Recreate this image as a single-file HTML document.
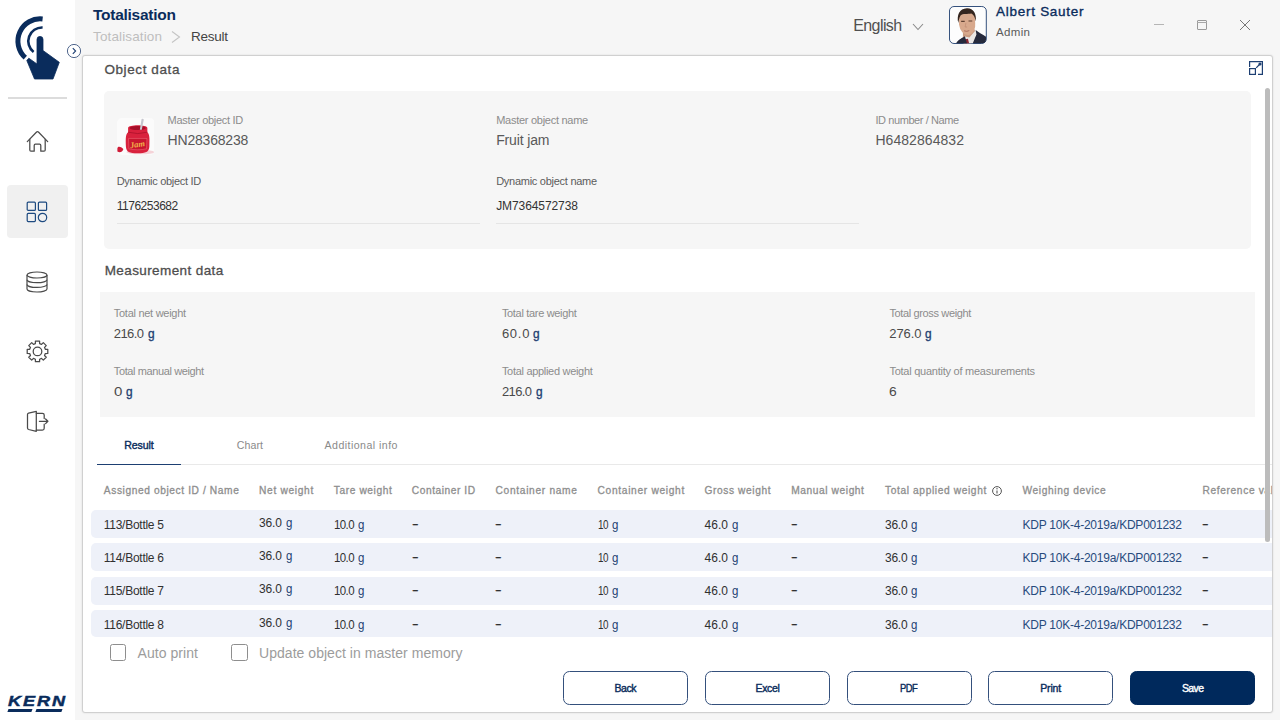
<!DOCTYPE html>
<html lang="en">
<head>
<meta charset="utf-8">
<title>Totalisation - Result</title>
<style>
*{box-sizing:border-box;margin:0;padding:0}
html,body{width:1280px;height:720px;overflow:hidden}
body{background:#f6f6f6;font-family:"Liberation Sans",sans-serif;position:relative;color:#555}
.a{position:absolute}
.t{position:absolute;white-space:pre;line-height:1}
#side{left:0;top:0;width:74.5px;height:720px;background:#fff}
#panel{left:82px;top:55px;width:1191px;height:658px;background:#fff;border:1px solid #d0d0d0;border-radius:3px;box-shadow:0 0 2px rgba(0,0,0,.12)}
.card{background:#f6f6f6}
.row{left:90.5px;width:1181px;height:27.8px;background:#eef1f9;border-radius:5px 0 0 5px}
.ul{height:1px;background:#e5e5e5;width:363px;top:222.5px}
.btn{top:670.9px;width:125px;height:33.7px;border:1px solid #34507c;border-radius:6.5px;background:#fff}
.cb{width:16.6px;height:16.6px;border:1px solid #8e8e8e;border-radius:2.5px;background:#fff;top:644.2px}
#txt{left:0;top:0;width:1272px;height:720px;overflow:hidden}
</style>
</head>
<body>
<div id="side" class="a">
<!-- touch logo -->
<svg class="a" style="left:0;top:0" width="75" height="92" viewBox="0 0 75 92">
<path d="M42.6 19 A22.2 22.2 0 0 0 25.3 57.6" fill="none" stroke="#0a2c5c" stroke-width="5"/>
<path d="M42.6 27.5 A13.7 13.7 0 0 0 33.6 52" fill="none" stroke="#0a2c5c" stroke-width="2.6"/>
<path d="M37 39.4 a3 3 0 0 1 6 0 V50.5 L59.3 62.3 L53 79 H34.5 L26.8 60.5 L28.8 58.2 L37 64 Z" fill="#0a2c5c" stroke="#0a2c5c" stroke-width=".8" stroke-linejoin="round"/>
</svg>
<!-- expand circle -->
<svg class="a" style="left:66px;top:43px;z-index:5" width="16" height="16" viewBox="0 0 16 16">
<circle cx="8" cy="8" r="6.6" fill="#fff" stroke="#3d5680" stroke-width=".9"/>
<path d="M6.8 5.2 L9.6 8 L6.8 10.8" fill="none" stroke="#1d3f72" stroke-width="1.1"/>
</svg>
<div class="a" style="left:8px;top:97px;width:59px;height:1.5px;background:#dcdcdc"></div>
<!-- home -->
<svg class="a" style="left:0;top:120px" width="75" height="44" viewBox="0 120 75 44" fill="none" stroke="#4a4a4a" stroke-width="1.25" stroke-linejoin="round" stroke-linecap="round">
<path d="M27.3 141.6 L36.6 132 Q37.5 131.1 38.4 132 L47.7 141.6"/>
<path d="M29.8 139.4 V150 Q29.8 151.2 31 151.2 H34.2 V145.4 Q34.2 144.2 35.4 144.2 H39.6 Q40.8 144.2 40.8 145.4 V151.2 H44 Q45.2 151.2 45.2 150 V139.4"/>
</svg>
<!-- active tile -->
<div class="a" style="left:7px;top:185px;width:61px;height:53px;background:#f0f0f0;border-radius:4px"></div>
<svg class="a" style="left:25px;top:200px" width="24" height="24" viewBox="0 0 24 24" fill="none" stroke="#1d4a80" stroke-width="1.2">
<rect x="2.2" y="2.2" width="8.2" height="8.2" rx="1"/>
<rect x="13.4" y="2.2" width="8.2" height="8.2" rx="1"/>
<rect x="2.2" y="13.4" width="8.2" height="8.2" rx="1"/>
<circle cx="17.5" cy="17.5" r="4.2"/>
</svg>
<!-- database -->
<svg class="a" style="left:25px;top:270px" width="24" height="24" viewBox="0 0 24 24" fill="none" stroke="#4a4a4a" stroke-width="1.2">
<ellipse cx="12" cy="5" rx="10" ry="3"/>
<path d="M2 5 V19 C2 20.7 6.5 22 12 22 S22 20.7 22 19 V5"/>
<path d="M2 9.7 C2 11.4 6.5 12.7 12 12.7 S22 11.4 22 9.7"/>
<path d="M2 14.4 C2 16.1 6.5 17.4 12 17.4 S22 16.1 22 14.4"/>
</svg>
<!-- gear -->
<svg class="a" style="left:0;top:330px" width="75" height="44" viewBox="0 330 75 44" fill="none" stroke="#4a4a4a" stroke-width="1.25" stroke-linejoin="round">
<circle cx="37.5" cy="351.4" r="4.3"/>
<path d="M35.40 343.58 L35.41 341.11 L39.59 341.11 L39.60 343.58 L41.55 344.39 L43.30 342.64 L46.26 345.60 L44.51 347.35 L45.32 349.30 L47.79 349.31 L47.79 353.49 L45.32 353.50 L44.51 355.45 L46.26 357.20 L43.30 360.16 L41.55 358.41 L39.60 359.22 L39.59 361.69 L35.41 361.69 L35.40 359.22 L33.45 358.41 L31.70 360.16 L28.74 357.20 L30.49 355.45 L29.68 353.50 L27.21 353.49 L27.21 349.31 L29.68 349.30 L30.49 347.35 L28.74 345.60 L31.70 342.64 L33.45 344.39 Z"/>
</svg>
<!-- logout -->
<svg class="a" style="left:0;top:400px" width="75" height="44" viewBox="0 400 75 44" fill="none" stroke="#4a4a4a" stroke-width="1.25" stroke-linejoin="round" stroke-linecap="round">
<path d="M28.6 413.1 L36.3 411.4 V431.3 L28.6 429.5 Q27.5 429.2 27.5 428.1 V414.4 Q27.5 413.4 28.6 413.1 Z"/>
<path d="M36.3 413.3 H42.4 Q44.2 413.3 44.2 415.1 V418.6"/>
<path d="M44.2 424.2 V428.2 Q44.2 430 42.4 430 H36.3"/>
<path d="M39.4 421.3 H47.8 M45.6 419 L47.9 421.3 L45.6 423.6"/>
</svg>
<!-- KERN -->
<div class="t" style="left:8.2px;top:694.3px;font-size:16.5px;font-weight:bold;font-style:italic;color:#0a2c5c;letter-spacing:1.7px;-webkit-text-stroke:.5px #0a2c5c;transform:scale(1.1,.84);transform-origin:0 0">KERN</div>
<div class="a" style="left:7.6px;top:708.8px;width:24.4px;height:2.6px;background:#0a2c5c;transform:skewX(-20deg)"></div>
<div class="a" style="left:36.2px;top:708.8px;width:25.8px;height:2.6px;background:#0a2c5c;transform:skewX(-20deg)"></div>
</div>
<!-- header icons -->
<svg class="a" style="left:170px;top:30px" width="12" height="14" viewBox="0 0 12 14"><path d="M2 1.5 L9.5 7 L2 12.5" fill="none" stroke="#c4c4c4" stroke-width="1.1"/></svg>
<svg class="a" style="left:912px;top:23px" width="12" height="8" viewBox="0 0 12 8"><path d="M1 1 L6 6.5 L11 1" fill="none" stroke="#8a8a8a" stroke-width="1.1"/></svg>
<svg class="a" style="left:949px;top:6px" width="37.8" height="38" viewBox="0 0 38 38" preserveAspectRatio="none">
<defs><clipPath id="av"><rect x=".8" y=".8" width="36.4" height="36.4" rx="4"/></clipPath></defs>
<rect x=".5" y=".5" width="37" height="37" rx="4.5" fill="#fdfdfd" stroke="#34507c" stroke-width="1"/>
<g clip-path="url(#av)">
<path d="M14 25 L25 22 L28 30 L22 38 H14 Z" fill="#c99a80"/>
<path d="M15.8 30.5 L20.5 31.5 L26.8 24.2 L28.5 29 L24 38 H15 Z" fill="#ebe8e6"/>
<path d="M15.6 33.6 L19 32.8 L20.4 38 H15.2 Z" fill="#8a2732"/>
<path d="M7 38 C8 34.6 11.5 32.8 16 30.2 L18.2 38 Z" fill="#262a3c"/>
<path d="M26.8 24 C30 26.5 34 28.5 37.5 31 V38 H23.6 L27.6 28.4 Z" fill="#262a3c"/>
<ellipse cx="18.2" cy="17.6" rx="8.2" ry="11.4" transform="rotate(-7 18.2 17.6)" fill="#d8a98d"/><ellipse cx="18.4" cy="12.5" rx="8.3" ry="8.5" fill="#d8a98d"/>
<path d="M9.3 17 C7.5 9 10.5 2.6 18 2.2 C24.5 2 28 7.5 26.8 15.5 C26.3 12 25 8.6 22.5 7.6 C18.5 8.4 14 7.4 11.6 9.6 C10.3 11.6 9.9 14.5 9.3 17 Z" fill="#35261f"/>
<path d="M12.2 15.4 h3.6 M19.6 15 h3.8" stroke="#5e4032" stroke-width="1.1"/>
<path d="M15.2 24.8 q2.6 1.2 5.2 -.2" stroke="#a5685a" stroke-width=".9" fill="none"/>
<path d="M17 17 L16.2 21 h2" stroke="#bf8a72" stroke-width=".7" fill="none"/>
</g>
</svg>
<div class="a" style="left:1153.8px;top:24px;width:10px;height:1px;background:#b5b5b5"></div>
<div class="a" style="left:1197px;top:20px;width:10px;height:10px;border:1px solid #9a9a9a;border-radius:1px"></div><div class="a" style="left:1197px;top:22px;width:10px;height:1px;background:#a8a8a8"></div>
<svg class="a" style="left:1239px;top:19px" width="12" height="12" viewBox="0 0 12 12"><path d="M1 1 L11 11 M11 1 L1 11" stroke="#777" stroke-width="1"/></svg>
<!-- panel -->
<div id="panel" class="a"></div>
<svg class="a" style="left:1248px;top:60px" width="16" height="16" viewBox="0 0 16 16" fill="none" stroke="#1d3f72" stroke-width="1.2">
<path d="M1.6 7 V1.6 H14.4 V14.4 H10"/>
<rect x="1.6" y="8.6" width="5.8" height="5.8"/>
<path d="M8.2 7.8 L12 4"/><circle cx="12" cy="4" r="1" fill="#1d3f72"/>
</svg>
<div class="a card" style="left:104px;top:91px;width:1147px;height:158px;border-radius:5px"></div>
<!-- jam -->
<svg class="a" style="left:116.7px;top:118px" width="37.7" height="37" viewBox="0 0 38 38" preserveAspectRatio="none">
<rect width="38" height="38" rx="5" fill="#fbfbfb"/>
<ellipse cx="23.5" cy="35" rx="14" ry="2.3" fill="#f4d3d8"/>
<path d="M11.2 10.2 C11.2 6.4 30.6 6.4 30.6 10.2 V14.6 C32.8 16.6 33 20 32.6 29.5 C32.2 35 29 36.2 20.8 36.2 S9.4 35 9 29.5 C8.6 20 8.8 16.6 11.2 14.6 Z" fill="#d9213d"/>
<ellipse cx="20.9" cy="10.2" rx="8.2" ry="2.1" fill="#a60f29"/>
<path d="M24.8 .9 Q26.4 .3 27 1.5 L25 12 H23 Z" fill="#c6c6ce"/>
<path d="M11.3 14.6 Q21 17.4 30.6 14.6" stroke="#b5142e" stroke-width="1" fill="none"/>
<path d="M11.6 21 H30.2 L29.8 31.6 C24.5 33 17 33 12 31.6 Z" fill="#c8162f" stroke="#ec6a78" stroke-width=".55"/>
<path d="M.4 31 C1 29 3.6 29.2 6.4 31.8 C5.6 35 2.6 36 .4 34.4 Z" fill="#cf1b37"/>
<text x="13.2" y="29.8" font-family="Liberation Serif, serif" font-style="italic" font-weight="bold" font-size="8.5" fill="#f2b24a" transform="rotate(-9 21 28)">Jam</text>
</svg>
<div class="a ul" style="left:116.7px"></div>
<div class="a ul" style="left:496.2px"></div>
<div class="a card" style="left:100px;top:291.7px;width:1155px;height:125.5px"></div>
<!-- tabs -->
<div class="a" style="left:97px;top:464px;width:1175px;height:1px;background:#e9e9e9"></div>
<div class="a" style="left:97px;top:463.5px;width:84.3px;height:1.6px;background:#1d3f72"></div>
<svg class="a" style="left:991.2px;top:485px" width="12" height="12" viewBox="0 0 12 12"><circle cx="6" cy="6" r="4.4" fill="none" stroke="#555" stroke-width="1"/><path d="M6 5.4 V8.4" stroke="#555" stroke-width="1.1"/><circle cx="6" cy="3.7" r=".7" fill="#555"/></svg>
<div class="a row" style="top:510px"></div>
<div class="a row" style="top:543.4px"></div>
<div class="a row" style="top:576.8px"></div>
<div class="a row" style="top:610.2px;height:26.6px"></div>
<div class="a cb" style="left:109.7px"></div>
<div class="a cb" style="left:231.4px"></div>
<div class="a btn" style="left:563.1px"></div>
<div class="a btn" style="left:705.2px"></div>
<div class="a btn" style="left:846.6px"></div>
<div class="a btn" style="left:988.3px"></div>
<div class="a btn" style="left:1130px;background:#00295c;border-color:#00295c"></div>
<!-- texts -->
<div id="txt" class="a">
<div class="t" style="left:93.0px;top:7.4px;font-size:15.5px;color:#0a2c5c;font-weight:bold;letter-spacing:-0.26px">Totalisation</div>
<div class="t" style="left:93.0px;top:29.9px;font-size:13.5px;color:#bebebe;letter-spacing:0.13px">Totalisation</div>
<div class="t" style="left:191.0px;top:29.9px;font-size:13.5px;color:#444;letter-spacing:-0.25px">Result</div>
<div class="t" style="left:853.2px;top:18.2px;font-size:16px;color:#505050;letter-spacing:-0.58px">English</div>
<div class="t" style="left:996.0px;top:4.6px;font-size:13.5px;color:#0a2c5c;letter-spacing:0.73px;-webkit-text-stroke:0.35px #0a2c5c">Albert Sauter</div>
<div class="t" style="left:996.0px;top:27.1px;font-size:11.5px;color:#5a5a5a;letter-spacing:0.35px">Admin</div>
<div class="t" style="left:104.4px;top:62.8px;font-size:13.5px;color:#4e4e4e;letter-spacing:0.60px;-webkit-text-stroke:0.3px #4e4e4e">Object data</div>
<div class="t" style="left:167.6px;top:115.1px;font-size:11px;color:#8c8c8c;letter-spacing:-0.30px">Master object ID</div>
<div class="t" style="left:167.6px;top:133.2px;font-size:14px;color:#595959;letter-spacing:-0.20px">HN28368238</div>
<div class="t" style="left:496.2px;top:115.1px;font-size:11px;color:#8c8c8c;letter-spacing:-0.27px">Master object name</div>
<div class="t" style="left:496.2px;top:133.2px;font-size:14px;color:#595959;letter-spacing:-0.14px">Fruit jam</div>
<div class="t" style="left:875.4px;top:115.1px;font-size:11px;color:#8c8c8c;letter-spacing:-0.41px">ID number / Name</div>
<div class="t" style="left:875.4px;top:133.2px;font-size:14px;color:#595959;letter-spacing:0.06px">H6482864832</div>
<div class="t" style="left:116.7px;top:175.6px;font-size:11px;color:#5c5c5c;letter-spacing:-0.30px">Dynamic object ID</div>
<div class="t" style="left:116.7px;top:199.5px;font-size:12px;color:#333;letter-spacing:-0.48px">1176253682</div>
<div class="t" style="left:496.2px;top:175.6px;font-size:11px;color:#5c5c5c;letter-spacing:-0.27px">Dynamic object name</div>
<div class="t" style="left:496.2px;top:199.5px;font-size:12px;color:#333;letter-spacing:-0.09px">JM7364572738</div>
<div class="t" style="left:104.7px;top:264.0px;font-size:13.5px;color:#4e4e4e;letter-spacing:0.40px;-webkit-text-stroke:0.3px #4e4e4e">Measurement data</div>
<div class="t" style="left:113.8px;top:307.9px;font-size:11px;color:#8c8c8c;letter-spacing:-0.28px">Total net weight</div>
<div class="t" style="left:501.9px;top:307.9px;font-size:11px;color:#8c8c8c;letter-spacing:-0.32px">Total tare weight</div>
<div class="t" style="left:889.4px;top:307.9px;font-size:11px;color:#8c8c8c;letter-spacing:-0.36px">Total gross weight</div>
<div class="t" style="left:113.8px;top:366.1px;font-size:11px;color:#8c8c8c;letter-spacing:-0.39px">Total manual weight</div>
<div class="t" style="left:501.9px;top:366.1px;font-size:11px;color:#8c8c8c;letter-spacing:-0.30px">Total applied weight</div>
<div class="t" style="left:889.4px;top:366.1px;font-size:11px;color:#8c8c8c;letter-spacing:-0.25px">Total quantity of measurements</div>
<div class="t" style="left:113.8px;top:326.7px;font-size:13px;color:#4a4a4a;letter-spacing:-0.59px">216.0</div>
<div class="t" style="left:147.8px;top:326.7px;font-size:13px;color:#1d3f72;-webkit-text-stroke:0.35px #1d3f72;transform:scaleX(0.912);transform-origin:0 0">g</div>
<div class="t" style="left:501.9px;top:326.7px;font-size:13px;color:#4a4a4a;letter-spacing:0.73px">60.0</div>
<div class="t" style="left:533.2px;top:326.7px;font-size:13px;color:#1d3f72;-webkit-text-stroke:0.35px #1d3f72;transform:scaleX(0.912);transform-origin:0 0">g</div>
<div class="t" style="left:889.2px;top:326.7px;font-size:13px;color:#4a4a4a;letter-spacing:-0.04px">276.0</div>
<div class="t" style="left:925.4px;top:326.7px;font-size:13px;color:#1d3f72;-webkit-text-stroke:0.35px #1d3f72;transform:scaleX(0.912);transform-origin:0 0">g</div>
<div class="t" style="left:113.8px;top:384.5px;font-size:13px;color:#4a4a4a;transform:scaleX(1.161);transform-origin:0 0">0</div>
<div class="t" style="left:126.0px;top:384.5px;font-size:13px;color:#1d3f72;-webkit-text-stroke:0.35px #1d3f72;transform:scaleX(0.912);transform-origin:0 0">g</div>
<div class="t" style="left:501.9px;top:384.5px;font-size:13px;color:#4a4a4a;letter-spacing:-0.59px">216.0</div>
<div class="t" style="left:535.9px;top:384.5px;font-size:13px;color:#1d3f72;-webkit-text-stroke:0.35px #1d3f72;transform:scaleX(0.912);transform-origin:0 0">g</div>
<div class="t" style="left:889.2px;top:384.5px;font-size:13px;color:#4a4a4a;transform:scaleX(1.064);transform-origin:0 0">6</div>
<div class="t" style="left:124.3px;top:439.8px;font-size:10.6px;color:#0a2c5c;letter-spacing:-0.11px;-webkit-text-stroke:0.4px #0a2c5c">Result</div>
<div class="t" style="left:236.8px;top:439.8px;font-size:10.6px;color:#8a8a8a;letter-spacing:0.07px">Chart</div>
<div class="t" style="left:324.5px;top:439.8px;font-size:10.6px;color:#8a8a8a;letter-spacing:0.46px">Additional info</div>
<div class="t" style="left:103.8px;top:486.3px;font-size:10.2px;color:#8e8e8e;letter-spacing:0.60px;-webkit-text-stroke:0.3px #8e8e8e">Assigned object ID / Name</div>
<div class="t" style="left:259.0px;top:486.3px;font-size:10.2px;color:#8e8e8e;letter-spacing:0.68px;-webkit-text-stroke:0.3px #8e8e8e">Net weight</div>
<div class="t" style="left:333.8px;top:486.3px;font-size:10.2px;color:#8e8e8e;letter-spacing:0.59px;-webkit-text-stroke:0.3px #8e8e8e">Tare weight</div>
<div class="t" style="left:411.8px;top:486.3px;font-size:10.2px;color:#8e8e8e;letter-spacing:0.55px;-webkit-text-stroke:0.3px #8e8e8e">Container ID</div>
<div class="t" style="left:495.5px;top:486.3px;font-size:10.2px;color:#8e8e8e;letter-spacing:0.69px;-webkit-text-stroke:0.3px #8e8e8e">Container name</div>
<div class="t" style="left:597.5px;top:486.3px;font-size:10.2px;color:#8e8e8e;letter-spacing:0.69px;-webkit-text-stroke:0.3px #8e8e8e">Container weight</div>
<div class="t" style="left:704.5px;top:486.3px;font-size:10.2px;color:#8e8e8e;letter-spacing:0.60px;-webkit-text-stroke:0.3px #8e8e8e">Gross weight</div>
<div class="t" style="left:791.3px;top:486.3px;font-size:10.2px;color:#8e8e8e;letter-spacing:0.58px;-webkit-text-stroke:0.3px #8e8e8e">Manual weight</div>
<div class="t" style="left:885.0px;top:486.3px;font-size:10.2px;color:#8e8e8e;letter-spacing:0.62px;-webkit-text-stroke:0.3px #8e8e8e">Total applied weight</div>
<div class="t" style="left:1022.5px;top:486.3px;font-size:10.2px;color:#8e8e8e;letter-spacing:0.62px;-webkit-text-stroke:0.3px #8e8e8e">Weighing device</div>
<div class="t" style="left:1202.5px;top:486.3px;font-size:10.2px;color:#8e8e8e;letter-spacing:0.63px;-webkit-text-stroke:0.3px #8e8e8e">Reference value</div>
<div class="t" style="left:103.8px;top:518.6px;font-size:12px;color:#303030;letter-spacing:-0.27px">113/Bottle 5</div>
<div class="t" style="left:259.0px;top:516.6px;font-size:12px;color:#303030;letter-spacing:-0.12px">36.0</div>
<div class="t" style="left:285.8px;top:516.6px;font-size:12px;color:#1d3f72;transform:scaleX(0.957);transform-origin:0 0">g</div>
<div class="t" style="left:333.8px;top:518.6px;font-size:12px;color:#303030;letter-spacing:-0.60px;transform:scaleX(0.956);transform-origin:0 0">10.0</div>
<div class="t" style="left:358.2px;top:518.6px;font-size:12px;color:#1d3f72;transform:scaleX(0.957);transform-origin:0 0">g</div>
<div class="t" style="left:411.5px;top:517.6px;font-size:12px;color:#303030;-webkit-text-stroke:0.2px #303030;transform:scaleX(1.650);transform-origin:0 0">-</div>
<div class="t" style="left:495.2px;top:517.6px;font-size:12px;color:#303030;-webkit-text-stroke:0.2px #303030;transform:scaleX(1.650);transform-origin:0 0">-</div>
<div class="t" style="left:597.5px;top:518.6px;font-size:12px;color:#303030;letter-spacing:-0.60px;transform:scaleX(0.823);transform-origin:0 0">10</div>
<div class="t" style="left:612.0px;top:518.6px;font-size:12px;color:#1d3f72;transform:scaleX(0.957);transform-origin:0 0">g</div>
<div class="t" style="left:704.5px;top:518.6px;font-size:12px;color:#303030;letter-spacing:0.05px">46.0</div>
<div class="t" style="left:732.0px;top:518.6px;font-size:12px;color:#1d3f72;transform:scaleX(0.957);transform-origin:0 0">g</div>
<div class="t" style="left:791.0px;top:517.6px;font-size:12px;color:#303030;-webkit-text-stroke:0.2px #303030;transform:scaleX(1.650);transform-origin:0 0">-</div>
<div class="t" style="left:885.0px;top:518.6px;font-size:12px;color:#303030;letter-spacing:-0.25px">36.0</div>
<div class="t" style="left:911.4px;top:518.6px;font-size:12px;color:#1d3f72;transform:scaleX(0.957);transform-origin:0 0">g</div>
<div class="t" style="left:1022.5px;top:518.6px;font-size:12px;color:#274b7d;letter-spacing:-0.24px">KDP 10K-4-2019a/KDP001232</div>
<div class="t" style="left:1202.2px;top:517.6px;font-size:12px;color:#303030;-webkit-text-stroke:0.2px #303030;transform:scaleX(1.650);transform-origin:0 0">-</div>
<div class="t" style="left:103.8px;top:552.0px;font-size:12px;color:#303030;letter-spacing:-0.27px">114/Bottle 6</div>
<div class="t" style="left:259.0px;top:550.0px;font-size:12px;color:#303030;letter-spacing:-0.12px">36.0</div>
<div class="t" style="left:285.8px;top:550.0px;font-size:12px;color:#1d3f72;transform:scaleX(0.957);transform-origin:0 0">g</div>
<div class="t" style="left:333.8px;top:552.0px;font-size:12px;color:#303030;letter-spacing:-0.60px;transform:scaleX(0.956);transform-origin:0 0">10.0</div>
<div class="t" style="left:358.2px;top:552.0px;font-size:12px;color:#1d3f72;transform:scaleX(0.957);transform-origin:0 0">g</div>
<div class="t" style="left:411.5px;top:551.0px;font-size:12px;color:#303030;-webkit-text-stroke:0.2px #303030;transform:scaleX(1.650);transform-origin:0 0">-</div>
<div class="t" style="left:495.2px;top:551.0px;font-size:12px;color:#303030;-webkit-text-stroke:0.2px #303030;transform:scaleX(1.650);transform-origin:0 0">-</div>
<div class="t" style="left:597.5px;top:552.0px;font-size:12px;color:#303030;letter-spacing:-0.60px;transform:scaleX(0.823);transform-origin:0 0">10</div>
<div class="t" style="left:612.0px;top:552.0px;font-size:12px;color:#1d3f72;transform:scaleX(0.957);transform-origin:0 0">g</div>
<div class="t" style="left:704.5px;top:552.0px;font-size:12px;color:#303030;letter-spacing:0.05px">46.0</div>
<div class="t" style="left:732.0px;top:552.0px;font-size:12px;color:#1d3f72;transform:scaleX(0.957);transform-origin:0 0">g</div>
<div class="t" style="left:791.0px;top:551.0px;font-size:12px;color:#303030;-webkit-text-stroke:0.2px #303030;transform:scaleX(1.650);transform-origin:0 0">-</div>
<div class="t" style="left:885.0px;top:552.0px;font-size:12px;color:#303030;letter-spacing:-0.25px">36.0</div>
<div class="t" style="left:911.4px;top:552.0px;font-size:12px;color:#1d3f72;transform:scaleX(0.957);transform-origin:0 0">g</div>
<div class="t" style="left:1022.5px;top:552.0px;font-size:12px;color:#274b7d;letter-spacing:-0.24px">KDP 10K-4-2019a/KDP001232</div>
<div class="t" style="left:1202.2px;top:551.0px;font-size:12px;color:#303030;-webkit-text-stroke:0.2px #303030;transform:scaleX(1.650);transform-origin:0 0">-</div>
<div class="t" style="left:103.8px;top:585.4px;font-size:12px;color:#303030;letter-spacing:-0.27px">115/Bottle 7</div>
<div class="t" style="left:259.0px;top:583.4px;font-size:12px;color:#303030;letter-spacing:-0.12px">36.0</div>
<div class="t" style="left:285.8px;top:583.4px;font-size:12px;color:#1d3f72;transform:scaleX(0.957);transform-origin:0 0">g</div>
<div class="t" style="left:333.8px;top:585.4px;font-size:12px;color:#303030;letter-spacing:-0.60px;transform:scaleX(0.956);transform-origin:0 0">10.0</div>
<div class="t" style="left:358.2px;top:585.4px;font-size:12px;color:#1d3f72;transform:scaleX(0.957);transform-origin:0 0">g</div>
<div class="t" style="left:411.5px;top:584.4px;font-size:12px;color:#303030;-webkit-text-stroke:0.2px #303030;transform:scaleX(1.650);transform-origin:0 0">-</div>
<div class="t" style="left:495.2px;top:584.4px;font-size:12px;color:#303030;-webkit-text-stroke:0.2px #303030;transform:scaleX(1.650);transform-origin:0 0">-</div>
<div class="t" style="left:597.5px;top:585.4px;font-size:12px;color:#303030;letter-spacing:-0.60px;transform:scaleX(0.823);transform-origin:0 0">10</div>
<div class="t" style="left:612.0px;top:585.4px;font-size:12px;color:#1d3f72;transform:scaleX(0.957);transform-origin:0 0">g</div>
<div class="t" style="left:704.5px;top:585.4px;font-size:12px;color:#303030;letter-spacing:0.05px">46.0</div>
<div class="t" style="left:732.0px;top:585.4px;font-size:12px;color:#1d3f72;transform:scaleX(0.957);transform-origin:0 0">g</div>
<div class="t" style="left:791.0px;top:584.4px;font-size:12px;color:#303030;-webkit-text-stroke:0.2px #303030;transform:scaleX(1.650);transform-origin:0 0">-</div>
<div class="t" style="left:885.0px;top:585.4px;font-size:12px;color:#303030;letter-spacing:-0.25px">36.0</div>
<div class="t" style="left:911.4px;top:585.4px;font-size:12px;color:#1d3f72;transform:scaleX(0.957);transform-origin:0 0">g</div>
<div class="t" style="left:1022.5px;top:585.4px;font-size:12px;color:#274b7d;letter-spacing:-0.24px">KDP 10K-4-2019a/KDP001232</div>
<div class="t" style="left:1202.2px;top:584.4px;font-size:12px;color:#303030;-webkit-text-stroke:0.2px #303030;transform:scaleX(1.650);transform-origin:0 0">-</div>
<div class="t" style="left:103.8px;top:618.8px;font-size:12px;color:#303030;letter-spacing:-0.27px">116/Bottle 8</div>
<div class="t" style="left:259.0px;top:616.8px;font-size:12px;color:#303030;letter-spacing:-0.12px">36.0</div>
<div class="t" style="left:285.8px;top:616.8px;font-size:12px;color:#1d3f72;transform:scaleX(0.957);transform-origin:0 0">g</div>
<div class="t" style="left:333.8px;top:618.8px;font-size:12px;color:#303030;letter-spacing:-0.60px;transform:scaleX(0.956);transform-origin:0 0">10.0</div>
<div class="t" style="left:358.2px;top:618.8px;font-size:12px;color:#1d3f72;transform:scaleX(0.957);transform-origin:0 0">g</div>
<div class="t" style="left:411.5px;top:617.8px;font-size:12px;color:#303030;-webkit-text-stroke:0.2px #303030;transform:scaleX(1.650);transform-origin:0 0">-</div>
<div class="t" style="left:495.2px;top:617.8px;font-size:12px;color:#303030;-webkit-text-stroke:0.2px #303030;transform:scaleX(1.650);transform-origin:0 0">-</div>
<div class="t" style="left:597.5px;top:618.8px;font-size:12px;color:#303030;letter-spacing:-0.60px;transform:scaleX(0.823);transform-origin:0 0">10</div>
<div class="t" style="left:612.0px;top:618.8px;font-size:12px;color:#1d3f72;transform:scaleX(0.957);transform-origin:0 0">g</div>
<div class="t" style="left:704.5px;top:618.8px;font-size:12px;color:#303030;letter-spacing:0.05px">46.0</div>
<div class="t" style="left:732.0px;top:618.8px;font-size:12px;color:#1d3f72;transform:scaleX(0.957);transform-origin:0 0">g</div>
<div class="t" style="left:791.0px;top:617.8px;font-size:12px;color:#303030;-webkit-text-stroke:0.2px #303030;transform:scaleX(1.650);transform-origin:0 0">-</div>
<div class="t" style="left:885.0px;top:618.8px;font-size:12px;color:#303030;letter-spacing:-0.25px">36.0</div>
<div class="t" style="left:911.4px;top:618.8px;font-size:12px;color:#1d3f72;transform:scaleX(0.957);transform-origin:0 0">g</div>
<div class="t" style="left:1022.5px;top:618.8px;font-size:12px;color:#274b7d;letter-spacing:-0.24px">KDP 10K-4-2019a/KDP001232</div>
<div class="t" style="left:1202.2px;top:617.8px;font-size:12px;color:#303030;-webkit-text-stroke:0.2px #303030;transform:scaleX(1.650);transform-origin:0 0">-</div>
<div class="t" style="left:137.5px;top:645.9px;font-size:14px;color:#9c9c9c;letter-spacing:0.06px">Auto print</div>
<div class="t" style="left:259.0px;top:645.9px;font-size:14px;color:#9c9c9c;letter-spacing:0.04px">Update object in master memory</div>
<div class="t" style="left:614.5px;top:682.5px;font-size:10.5px;color:#0a2c5c;letter-spacing:-0.45px;-webkit-text-stroke:0.4px #0a2c5c">Back</div>
<div class="t" style="left:755.5px;top:682.5px;font-size:10.5px;color:#0a2c5c;letter-spacing:-0.32px;-webkit-text-stroke:0.4px #0a2c5c">Excel</div>
<div class="t" style="left:900.2px;top:682.5px;font-size:10.5px;color:#0a2c5c;letter-spacing:-0.60px;-webkit-text-stroke:0.4px #0a2c5c;transform:scaleX(0.894);transform-origin:0 0">PDF</div>
<div class="t" style="left:1040.2px;top:682.5px;font-size:10.5px;color:#0a2c5c;letter-spacing:-0.15px;-webkit-text-stroke:0.4px #0a2c5c">Print</div>
<div class="t" style="left:1181.5px;top:682.5px;font-size:10.5px;color:#fff;letter-spacing:-0.60px;-webkit-text-stroke:0.4px #fff;transform:scaleX(0.994);transform-origin:0 0">Save</div>
</div>
<div class="a" style="left:1265.3px;top:88px;width:4.6px;height:454px;background:#bcbcbc;border-radius:3px"></div>
</body>
</html>
